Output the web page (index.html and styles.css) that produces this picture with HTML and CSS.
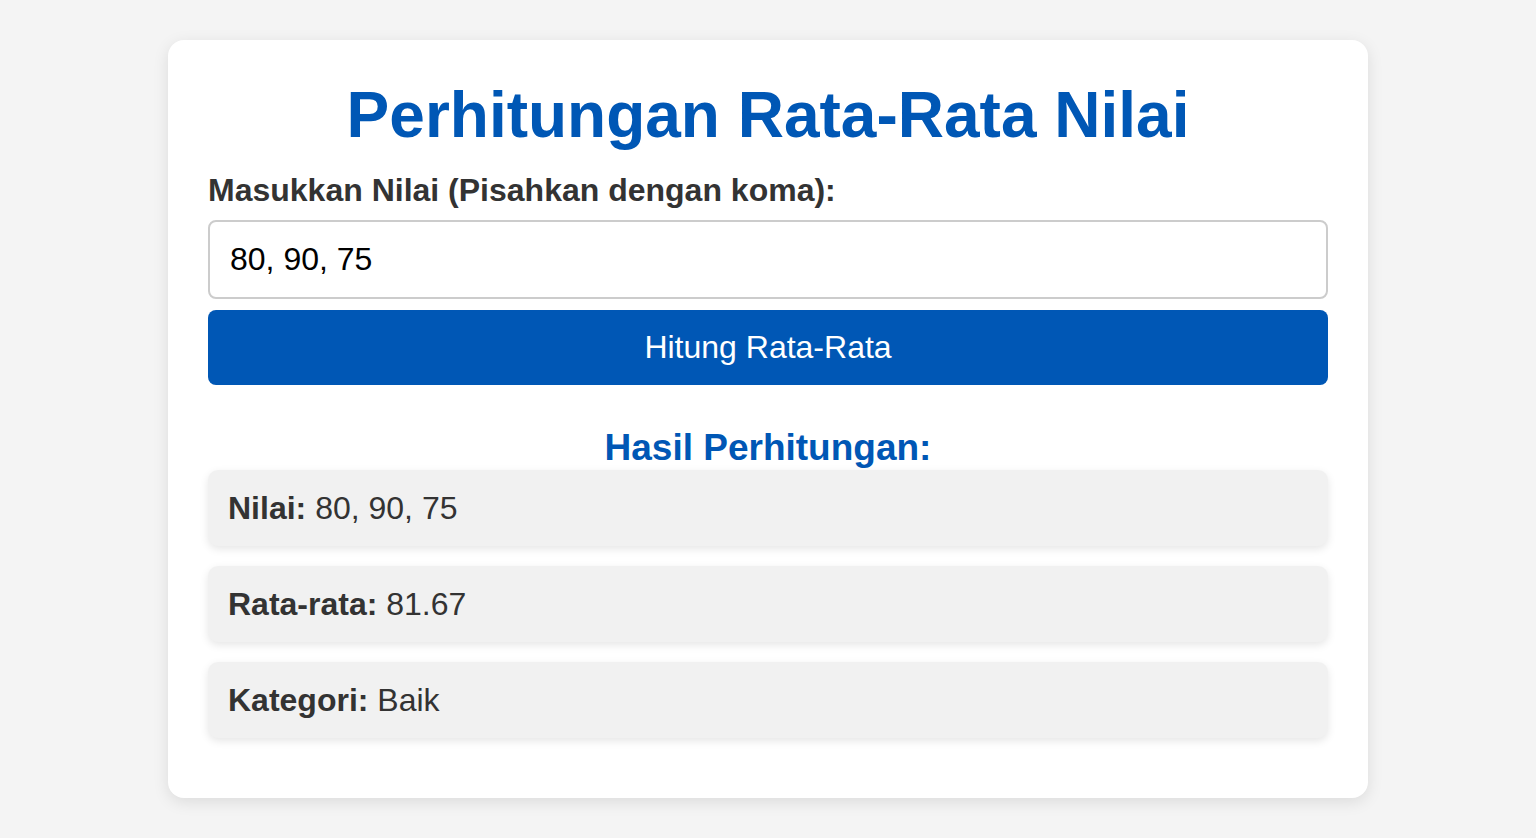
FILE: index.html
```html
<!DOCTYPE html>
<html lang="id">
<head>
<meta charset="utf-8">
<title>Perhitungan Rata-Rata Nilai</title>
<link rel="stylesheet" href="styles.css">
</head>
<body>
<div class="card">
  <h1 class="title">Perhitungan Rata-Rata Nilai</h1>
  <label class="label" for="nilai">Masukkan Nilai (Pisahkan dengan koma):</label>
  <input class="input" id="nilai" type="text" value="80, 90, 75">
  <button class="btn" type="button">Hitung Rata-Rata</button>
  <h2 class="result-title">Hasil Perhitungan:</h2>
  <div class="result"><strong>Nilai:</strong> 80, 90, 75</div>
  <div class="result"><strong>Rata-rata:</strong> 81.67</div>
  <div class="result"><strong>Kategori:</strong> Baik</div>
</div>
</body>
</html>
```
FILE: styles.css
```css
* { box-sizing: border-box; }
html, body { margin: 0; }
body {
  background: #f4f4f4;
  font-family: "Liberation Sans", Arial, sans-serif;
  color: #333;
  padding: 40px 0;
}
.card {
  width: 1200px;
  margin: 0 auto;
  background: #fff;
  border-radius: 16px;
  box-shadow: 0 4px 16px rgba(0,0,0,0.1);
  padding: 38px 40px 40px;
  display: flex;
  flex-direction: column;
}
.title {
  margin: 0 0 20px;
  font-size: 64px;
  line-height: normal;
  font-weight: bold;
  color: #0057b5;
  text-align: center;
}
.label {
  display: block;
  font-size: 32px;
  font-weight: bold;
  color: #333;
  margin-bottom: 11px;
}
.input {
  width: 100%;
  font-family: "Liberation Sans", Arial, sans-serif;
  font-size: 32px;
  line-height: normal;
  padding: 19px 20px;
  border: 2px solid #ccc;
  border-radius: 8px;
  color: #000;
  margin: 0;
}
.btn {
  margin-top: 11px;
  width: 100%;
  font-family: "Liberation Sans", Arial, sans-serif;
  font-size: 32px;
  line-height: normal;
  padding: 19px 20px;
  border: none;
  border-radius: 8px;
  background: #0057b5;
  color: #fff;
}
.result-title {
  margin: 42px 0 1px;
  font-size: 37px;
  line-height: normal;
  font-weight: bold;
  color: #0057b5;
  text-align: center;
}
.result {
  background: #f1f1f1;
  border-radius: 10px;
  padding: 19.5px 20px;
  font-size: 32px;
  line-height: normal;
  color: #333;
  margin-bottom: 20px;
  box-shadow: 0 3px 8px rgba(0,0,0,0.1);
}
```
